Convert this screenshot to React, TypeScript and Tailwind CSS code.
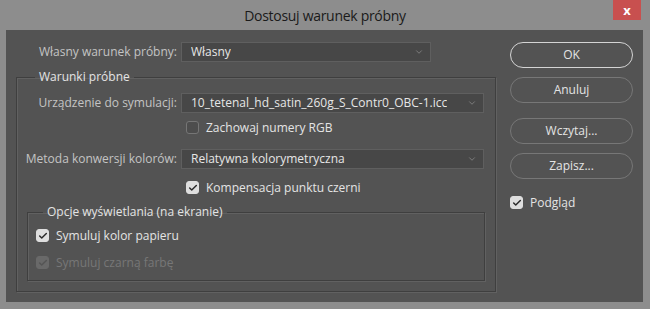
import { ChevronDown, Check } from 'lucide-react'

const font = { fontFamily: '"Open Sans", "Liberation Sans", sans-serif' }

function Select({ value, width }: { value: string; width: string }) {
  return (
    <div className={`${width} h-[20px] flex items-center justify-between pl-[9px] pr-[6px] bg-[#474747] border border-[#5f5f5f] text-[12px] text-[#e6e6e6]`}>
      <span className="truncate">{value}</span>
      <ChevronDown size={10} strokeWidth={1.5} className="text-[#9a9a9a] shrink-0" />
    </div>
  )
}

function Checkbox({ checked, disabled, label }: { checked?: boolean; disabled?: boolean; label: string }) {
  const box = disabled
    ? 'bg-[#696969] border-[#696969] text-[#555]'
    : checked
      ? 'bg-[#dedede] border-[#dedede] text-[#2a2a2a]'
      : 'bg-[#4d4d4d] border-[#767676]'
  return (
    <div className="flex items-center gap-[7px] h-[13px]">
      <div className={`w-[13px] h-[13px] rounded-[3px] border flex items-center justify-center ${box}`}>
        {checked && <Check size={10} strokeWidth={3.5} />}
      </div>
      <span className={`text-[12px] ${disabled ? 'text-[#777]' : 'text-[#e4e4e4]'}`}>{label}</span>
    </div>
  )
}

function Button({ label, primary }: { label: string; primary?: boolean }) {
  return (
    <div className={`w-[123px] h-[26px] rounded-full border flex items-center justify-center text-[12px] text-[#e4e4e4] ${primary ? 'border-[#d4d4d4]' : 'border-[#777]'}`}>
      {label}
    </div>
  )
}

export default function App() {
  return (
    <div className="w-[650px] h-[309px] bg-[#8d8d8d] flex flex-col" style={font}>
      {/* pasek tytułu */}
      <div className="relative h-[30px] flex items-center justify-center">
        <span className="text-[14px] text-[#1a1a1a] tracking-[-0.3px]">Dostosuj warunek próbny</span>
        <div className="absolute right-[9px] top-0 w-[28px] h-[20px] bg-[#c8504f] flex items-center justify-center text-white text-[13px] font-bold leading-none">
          x
        </div>
      </div>

      <div className="ml-[6px] mr-[7px] h-[272px] bg-[#535353] flex pt-[12px]">
        {/* lewa kolumna */}
        <div className="w-[504px] flex flex-col">
          <div className="flex items-center h-[19px]">
            <div className="w-[175px] pr-[4px] text-right text-[12px] text-[#c4c4c4]">Własny warunek próbny:</div>
            <Select value="Własny" width="w-[250px]" />
          </div>

          <fieldset className="ml-[10px] mt-[8px] w-[480px] h-[223px] border border-[#3f3f3f] shadow-[1px_1px_0_#616161,inset_1px_1px_0_#616161]">
            <legend className="ml-[18px] px-[4px] h-[16px] leading-[16px] text-[12px] text-[#e4e4e4]">Warunki próbne</legend>

            <div className="flex items-center mt-[8px]">
              <div className="w-[164px] pr-[4px] text-right text-[12px] text-[#c4c4c4]">Urządzenie do symulacji:</div>
              <Select value="10_tetenal_hd_satin_260g_S_Contr0_OBC-1.icc" width="w-[303px]" />
            </div>
            <div className="ml-[169px] mt-[8px]">
              <Checkbox label="Zachowaj numery RGB" />
            </div>

            <div className="flex items-center mt-[15px]">
              <div className="w-[164px] pr-[4px] text-right text-[12px] text-[#c4c4c4]">Metoda konwersji kolorów:</div>
              <Select value="Relatywna kolorymetryczna" width="w-[303px]" />
            </div>
            <div className="ml-[169px] mt-[12px]">
              <Checkbox checked label="Kompensacja punktu czerni" />
            </div>

            <fieldset className="ml-[10px] mt-[10px] w-[458px] h-[77px] border border-[#3f3f3f] shadow-[1px_1px_0_#616161,inset_1px_1px_0_#616161]">
              <legend className="ml-[15px] px-[4px] h-[16px] leading-[16px] text-[12px] text-[#e4e4e4]">Opcje wyświetlania (na ekranie)</legend>
              <div className="ml-[8px] mt-[9px] flex flex-col gap-[14px]">
                <Checkbox checked label="Symuluj kolor papieru" />
                <Checkbox checked disabled label="Symuluj czarną farbę" />
              </div>
            </fieldset>
          </fieldset>
        </div>

        {/* prawa kolumna */}
        <div className="flex flex-col">
          <Button primary label="OK" />
          <div className="mt-[9px]"><Button label="Anuluj" /></div>
          <div className="mt-[15px]"><Button label="Wczytaj..." /></div>
          <div className="mt-[9px]"><Button label="Zapisz..." /></div>
          <div className="mt-[17px]">
            <Checkbox checked label="Podgląd" />
          </div>
        </div>
      </div>
    </div>
  )
}
